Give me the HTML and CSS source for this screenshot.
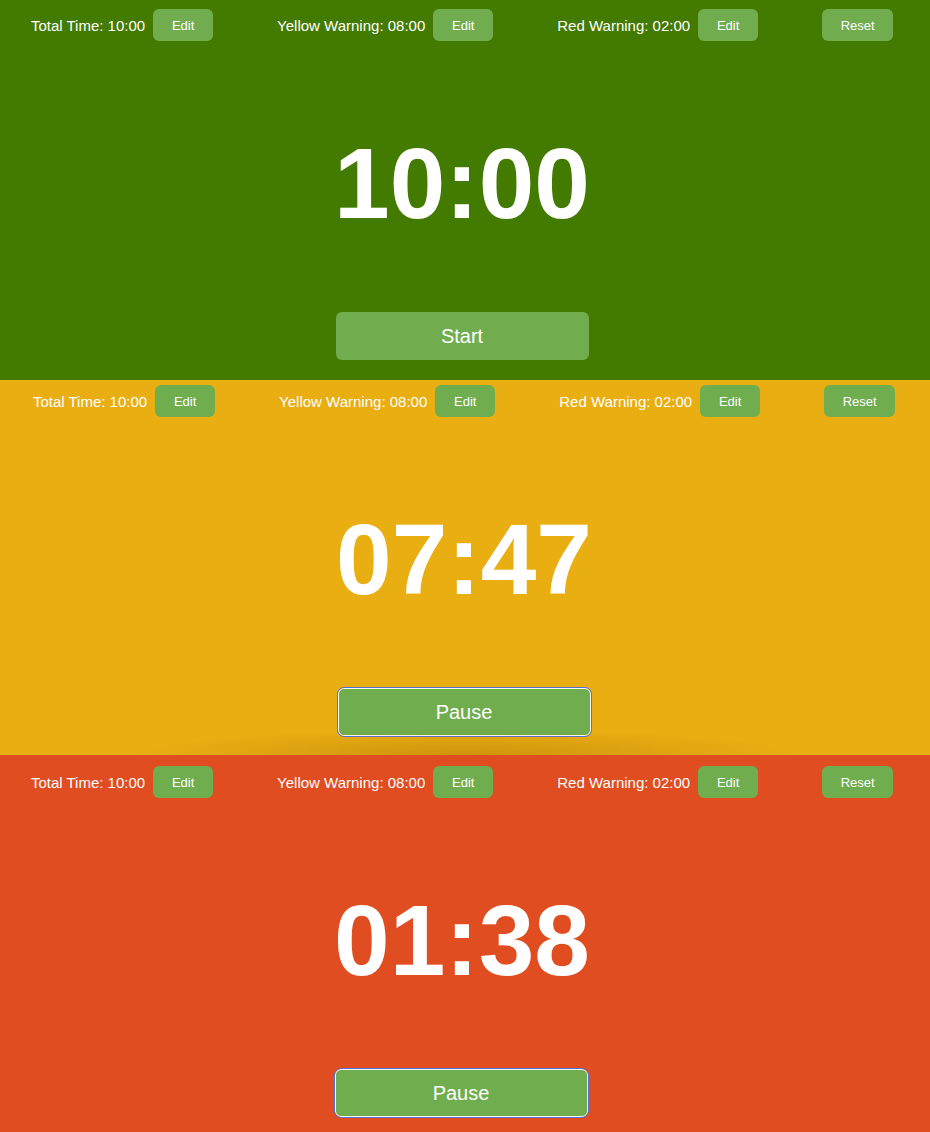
FILE: index.html
```html
<!DOCTYPE html>
<html lang="en">
<head>
<meta charset="utf-8">
<title>Presentation Timer</title>
<link rel="stylesheet" href="styles.css">
</head>
<body>
  <section class="panel panel-green">
    <div class="app">
      <div class="settings">
        <div class="setting"><span class="label">Total Time: 10:00</span><button class="btn-small">Edit</button></div>
        <div class="setting"><span class="label">Yellow Warning: 08:00</span><button class="btn-small">Edit</button></div>
        <div class="setting"><span class="label">Red Warning: 02:00</span><button class="btn-small">Edit</button></div>
        <div class="setting"><button class="btn-small btn-reset">Reset</button></div>
      </div>
      <div class="time">10:00</div>
      <button class="btn-main">Start</button>
    </div>
  </section>
  <section class="panel panel-yellow">
    <div class="app app-yellow">
      <div class="settings">
        <div class="setting"><span class="label">Total Time: 10:00</span><button class="btn-small">Edit</button></div>
        <div class="setting"><span class="label">Yellow Warning: 08:00</span><button class="btn-small">Edit</button></div>
        <div class="setting"><span class="label">Red Warning: 02:00</span><button class="btn-small">Edit</button></div>
        <div class="setting"><button class="btn-small btn-reset">Reset</button></div>
      </div>
      <div class="time">07:47</div>
      <button class="btn-main btn-focus">Pause</button>
    </div>
    <div class="shade"></div>
  </section>
  <section class="panel panel-red">
    <div class="app app-red">
      <div class="settings">
        <div class="setting"><span class="label">Total Time: 10:00</span><button class="btn-small">Edit</button></div>
        <div class="setting"><span class="label">Yellow Warning: 08:00</span><button class="btn-small">Edit</button></div>
        <div class="setting"><span class="label">Red Warning: 02:00</span><button class="btn-small">Edit</button></div>
        <div class="setting"><button class="btn-small btn-reset">Reset</button></div>
      </div>
      <div class="time">01:38</div>
      <button class="btn-main btn-focus btn-shift">Pause</button>
    </div>
  </section>
</body>
</html>
```

FILE: styles.css
```css
html, body {
  margin: 0;
  padding: 0;
}
body {
  width: 930px;
  font-family: "Liberation Sans", Arial, Helvetica, sans-serif;
  color: #fff;
  overflow: hidden;
}
.panel {
  position: relative;
  overflow: hidden;
}
.panel-green {
  height: 380px;
  background: #437a00;
}
.panel-yellow {
  height: 375px;
  background: #e9ae12;
}
.panel-red {
  height: 377px;
  background: #e04d21;
}
.app {
  width: 924px;
  padding-top: 9px;
  display: flex;
  flex-direction: column;
  align-items: center;
}
.app-yellow {
  margin-top: -4px;
  margin-left: 2px;
}
.app-red {
  margin-top: 2px;
}
.settings {
  display: flex;
  justify-content: center;
  align-items: center;
  gap: 64px;
  width: 100%;
}
.setting {
  display: flex;
  align-items: center;
  gap: 8px;
}
.label {
  font-size: 15px;
  color: #fff;
}
button {
  font-family: inherit;
  color: #fff;
  border: none;
  cursor: pointer;
}
.btn-small {
  width: 60px;
  height: 32px;
  border-radius: 6px;
  background: #70ad4e;
  font-size: 13px;
  padding: 0;
}
.btn-reset {
  width: 71px;
}
.panel-green .btn-small,
.panel-green .btn-main {
  background: #71ac4e;
}
.time {
  margin-top: 92px;
  font-size: 100px;
  line-height: 100px;
  font-weight: bold;
  letter-spacing: 0;
}
.btn-main {
  margin-top: 79px;
  width: 253px;
  height: 48px;
  border-radius: 6px;
  background: #70ad4e;
  font-size: 20px;
  padding: 0;
}
.btn-focus {
  border: 1px solid #fff;
  outline: 1px solid #5670d6;
  width: 253px;
  height: 48px;
}
.btn-shift {
  margin-left: -2px;
}
.shade {
  position: absolute;
  left: 130px;
  right: 130px;
  bottom: -24px;
  height: 50px;
  background: radial-gradient(ellipse at center, rgba(150, 90, 0, 0.3) 0%, rgba(150, 90, 0, 0) 70%);
  pointer-events: none;
}
```
